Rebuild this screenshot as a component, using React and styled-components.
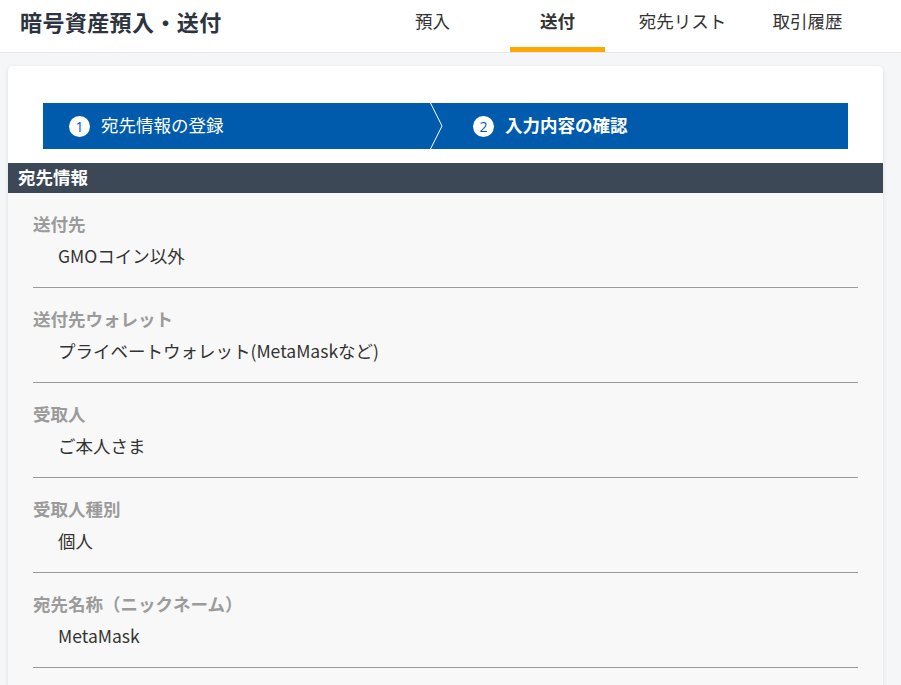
import React from "react";
import styled, { createGlobalStyle } from "styled-components";

const GlobalStyle = createGlobalStyle`
  body {
    margin: 0;
    background: #f5f6f8;
    font-family: "Noto Sans CJK JP", "Noto Sans", sans-serif;
    color: #333;
  }
`;

// Header
const Header = styled.header`
  display: flex;
  align-items: stretch;
  justify-content: space-between;
  height: 52px;
  background: #fff;
  border-bottom: 1px solid #e6e7ea;
  padding: 0 46px 0 20px;
`;

const Title = styled.h1`
  margin: 0;
  font-size: 22px;
  font-weight: 700;
  line-height: 42px;
  color: #2d3440;
  letter-spacing: 0.4px;
`;

const Tabs = styled.nav`
  display: flex;
  gap: 30px;
`;

const Tab = styled.div`
  width: 95px;
  display: flex;
  justify-content: center;
  padding-top: 9px;
  box-sizing: border-box;
  font-size: 17.5px;
  line-height: 24px;
  font-weight: ${({ active }) => (active ? 700 : 400)};
  color: #333;
  border-bottom: 5px solid ${({ active }) => (active ? "#ffa800" : "transparent")};
`;

// Card
const Card = styled.main`
  margin: 13px 18px 0 8px;
  background: #fff;
  border-radius: 5px;
  box-shadow: 0 1px 4px rgba(0, 0, 0, 0.1);
  overflow: hidden;
`;

const StepperWrap = styled.div`
  padding: 37px 35px 14px;
`;

const Stepper = styled.div`
  display: flex;
  height: 46px;
  background: #005bac;
`;

const Step = styled.div`
  display: flex;
  align-items: center;
  gap: 11px;
  flex: ${({ first }) => (first ? "0 0 361px" : "1")};
  padding-left: ${({ first }) => (first ? "26px" : "30px")};
  padding-bottom: 3px;
  color: #fff;
  font-size: 17.5px;
  font-weight: ${({ current }) => (current ? 700 : 400)};
`;

const StepNum = styled.span`
  width: 21px;
  height: 21px;
  margin-top: 3px;
  border-radius: 50%;
  background: #fff;
  color: #005bac;
  font-family: "Open Sans", sans-serif;
  font-size: 14px;
  font-weight: 400;
  display: flex;
  align-items: center;
  justify-content: center;
`;

const Chevron = () => (
  <svg width="13" height="46" viewBox="0 0 13 46">
    <polyline points="0.5,0 12,23 0.5,46" fill="none" stroke="#fff" strokeWidth="1" />
  </svg>
);

const SectionHead = styled.h2`
  margin: 0;
  height: 30px;
  line-height: 28px;
  padding-left: 10px;
  background: #3d4856;
  color: #fff;
  font-size: 17.5px;
  font-weight: 700;
`;

const List = styled.dl`
  margin: 0;
  padding: 0 25px 60px;
  background: #f8f8f8;
`;

const Item = styled.div`
  padding: 19px 0 19px;
  border-bottom: 1px solid #9a9a9a;
`;

const Label = styled.dt`
  font-size: 17.5px;
  line-height: 24px;
  font-weight: 700;
  color: #9b9b9b;
`;

const Value = styled.dd`
  margin: 7px 0 0 25px;
  font-size: 17.5px;
  line-height: 25px;
  color: #333;
`;

const tabs = ["預入", "送付", "宛先リスト", "取引履歴"];

const rows = [
  { label: "送付先", value: "GMOコイン以外" },
  { label: "送付先ウォレット", value: "プライベートウォレット(MetaMaskなど)" },
  { label: "受取人", value: "ご本人さま" },
  { label: "受取人種別", value: "個人" },
  { label: "宛先名称（ニックネーム）", value: "MetaMask" },
];

export default function App() {
  return (
    <>
      <GlobalStyle />
      <Header>
        <Title>暗号資産預入・送付</Title>
        <Tabs>
          {tabs.map((t) => (
            <Tab key={t} active={t === "送付"}>
              {t}
            </Tab>
          ))}
        </Tabs>
      </Header>

      <Card>
        <StepperWrap>
          <Stepper>
            <Step first>
              <StepNum>1</StepNum>
              宛先情報の登録
            </Step>
            <Chevron />
            <Step current>
              <StepNum>2</StepNum>
              入力内容の確認
            </Step>
          </Stepper>
        </StepperWrap>

        <SectionHead>宛先情報</SectionHead>
        <List>
          {rows.map((r) => (
            <Item key={r.label}>
              <Label>{r.label}</Label>
              <Value>{r.value}</Value>
            </Item>
          ))}
        </List>
      </Card>
    </>
  );
}
